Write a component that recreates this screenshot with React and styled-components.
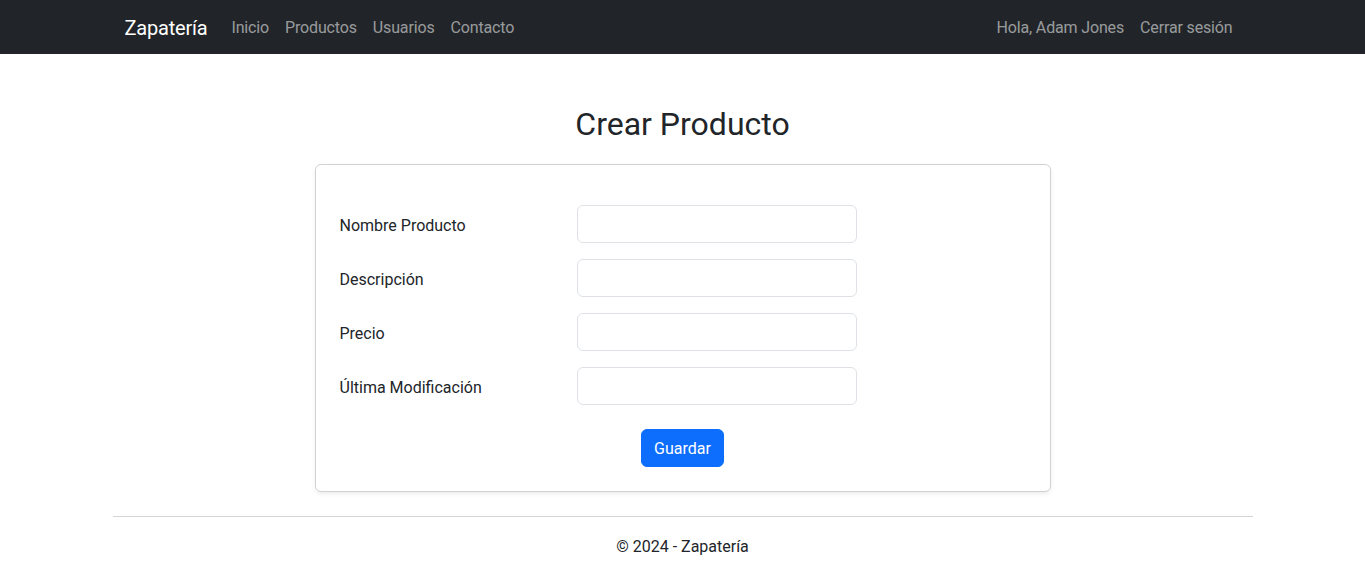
import styled, { createGlobalStyle } from "styled-components";

const GlobalStyle = createGlobalStyle`
  * { box-sizing: border-box; }
  body {
    margin: 0;
    font-family: Roboto, "Liberation Sans", sans-serif;
    font-size: 16px;
    line-height: 1.5;
    color: #212529;
    background: #fff;
  }
`;

const Navbar = styled.nav`
  background: #212529;
  height: 54px;
  display: flex;
  align-items: center;
`;

const Container = styled.div`
  width: 1140px;
  margin: 0 auto;
  padding: 0 12px;
  display: flex;
  align-items: center;
`;

const Brand = styled.a`
  font-size: 20px;
  color: #fff;
  margin-right: 16px;
  padding-top: 2px;
  letter-spacing: -0.2px;
  text-decoration: none;
`;

const NavList = styled.div`
  display: flex;
  margin-left: ${(p) => (p.$right ? "auto" : "0")};
`;

const NavLink = styled.a`
  color: rgba(255, 255, 255, 0.55);
  padding: 9px 8px 7px;
  letter-spacing: -0.15px;
  text-decoration: none;
`;

const Main = styled.main`
  padding-top: 51px;
  display: flex;
  flex-direction: column;
  align-items: center;
`;

const Title = styled.h2`
  font-size: 32px;
  font-weight: 400;
  line-height: 1.2;
  margin: 0 0 21px;
`;

const Card = styled.div`
  width: 736px;
  border: 1px solid rgba(0, 0, 0, 0.175);
  border-radius: 6px;
  box-shadow: 0 2px 4px rgba(0, 0, 0, 0.075);
  padding: 40px 24px 24px;
  display: flex;
  flex-direction: column;
`;

const Row = styled.div`
  display: grid;
  grid-template-columns: 237px 280px;
  align-items: center;
  margin-bottom: 16px;
`;

const Label = styled.label`
  font-size: 16px;
  padding-top: 3px;
`;

const Input = styled.input`
  height: 38px;
  width: 280px;
  border: 1px solid #dee2e6;
  border-radius: 6px;
  padding: 6px 12px;
  font: inherit;
`;

const Button = styled.button`
  align-self: center;
  margin-top: 8px;
  background: #0d6efd;
  color: #fff;
  border: 1px solid #0d6efd;
  border-radius: 6px;
  padding: 7px 12px 5px;
  font: inherit;
  line-height: 24px;
`;

const Footer = styled.footer`
  width: 1140px;
  margin: 24px auto 0;
  border-top: 1px solid #d3d4d5;
  text-align: center;
  padding-top: 18px;
`;

const fields = ["Nombre Producto", "Descripción", "Precio", "Última Modificación"];

export default function App() {
  return (
    <>
      <GlobalStyle />
      <Navbar>
        <Container>
          <Brand href="#">Zapatería</Brand>
          <NavList>
            <NavLink href="#">Inicio</NavLink>
            <NavLink href="#">Productos</NavLink>
            <NavLink href="#">Usuarios</NavLink>
            <NavLink href="#">Contacto</NavLink>
          </NavList>
          <NavList $right>
            <NavLink href="#">Hola, Adam Jones</NavLink>
            <NavLink href="#">Cerrar sesión</NavLink>
          </NavList>
        </Container>
      </Navbar>
      <Main>
        <Title>Crear Producto</Title>
        <Card>
          {fields.map((f) => (
            <Row key={f}>
              <Label>{f}</Label>
              <Input type="text" />
            </Row>
          ))}
          <Button>Guardar</Button>
        </Card>
      </Main>
      <Footer>© 2024 - Zapatería</Footer>
    </>
  );
}
